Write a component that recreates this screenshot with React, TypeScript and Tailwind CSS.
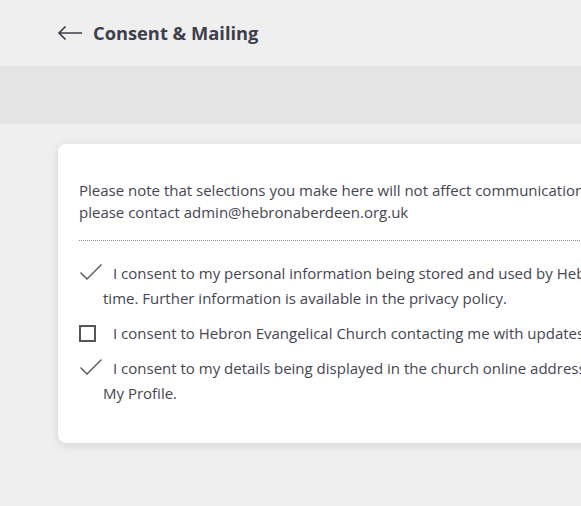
import React from "react";

function Check() {
  return (
    <span className="inline-block w-[24px] mr-[10px] align-[-3px] indent-0">
      <svg width="24" height="20" viewBox="0 0 24 20">
        <path d="M1.5 10.5 L8 17 L22.5 2.5" fill="none" stroke="#555" strokeWidth="1.4" />
      </svg>
    </span>
  );
}

function Box() {
  return (
    <span className="inline-block w-[24px] mr-[10px] align-[-3px] indent-0">
      <span className="block w-[17px] h-[17px] border-2 border-[#555]" />
    </span>
  );
}

export default function App() {
  return (
    <div
      className="w-[581px] h-[506px] overflow-hidden bg-[#efefef] text-[#3e3e4c]"
      style={{ fontFamily: "'Open Sans', 'Noto Sans', sans-serif" }}
    >
      <div className="h-[66px] flex items-center pl-[57px]">
        <svg width="26" height="16" viewBox="0 0 26 16" className="mr-[10px]">
          <path d="M25 8 H2 M8.5 1.5 L2 8 L8.5 14.5" fill="none" stroke="#3e3e4c" strokeWidth="1.7" />
        </svg>
        <span className="text-[18.3px] font-bold">Consent &amp; Mailing</span>
      </div>
      <div className="h-[58px] bg-[#e4e4e4]" />
      <div className="pt-[20px] pl-[58px]">
        <div className="w-[800px] bg-white rounded-[8px] shadow-[0_2px_10px_rgba(0,0,0,0.12)] pl-[21px] pr-[20px] pt-[35px] pb-[37px] text-[15px] text-[#454552]">
          <div className="leading-[22px] whitespace-nowrap">
            <p>Please note that selections you make here will not affect communications sent directly by church groups;</p>
            <p>please contact admin@hebronaberdeen.org.uk</p>
          </div>
          <div className="border-t border-dotted border-[#8a8a8a] mt-[17px] mb-[20px]" />
          <div className="flex flex-col gap-[10px] leading-[25px] whitespace-nowrap">
            <p className="pl-[24px] -indent-[24px]">
              <Check />
              I consent to my personal information being stored and used by Hebron Evangelical Church at any
              <br />
              time. Further information is available in the privacy policy.
            </p>
            <p className="pl-[24px] -indent-[24px]">
              <Box />
              I consent to Hebron Evangelical Church contacting me with updates and news by email.
            </p>
            <p className="pl-[24px] -indent-[24px]">
              <Check />
              I consent to my details being displayed in the church online address book, as configured in
              <br />
              My Profile.
            </p>
          </div>
        </div>
      </div>
    </div>
  );
}
